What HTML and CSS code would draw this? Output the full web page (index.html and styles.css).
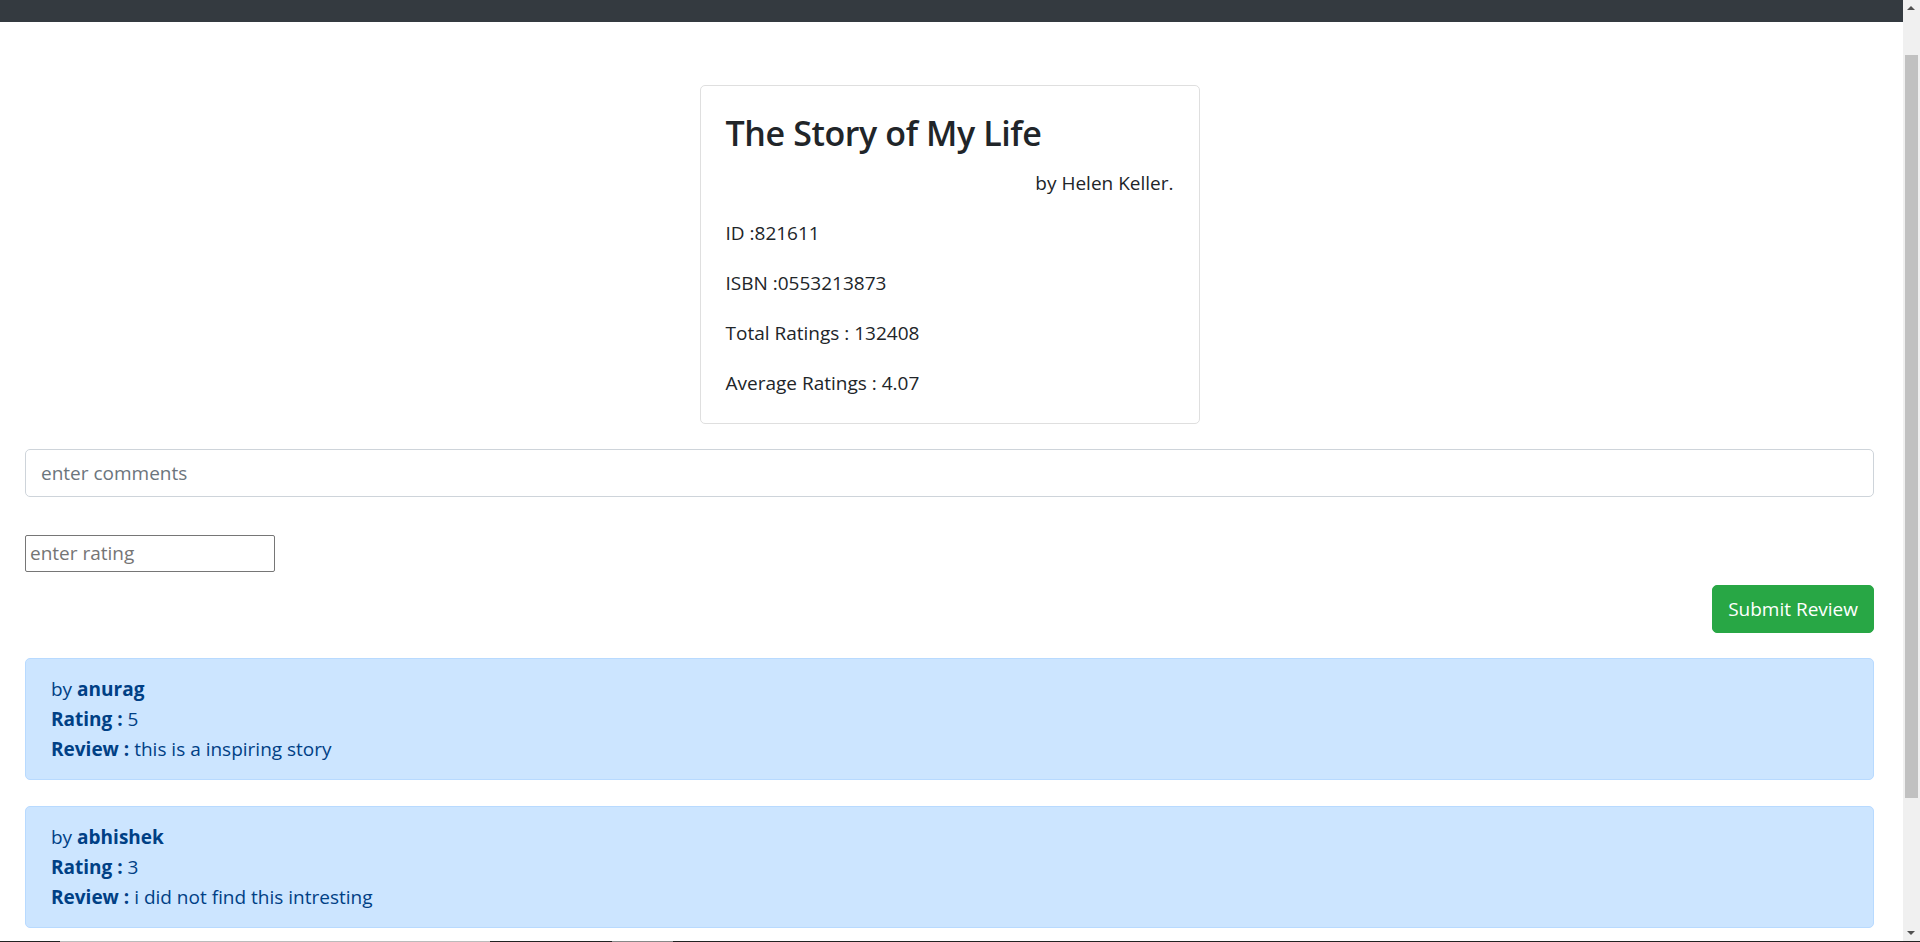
FILE: index.html
```html
<!DOCTYPE html>
<html lang="en">
<head>
<meta charset="utf-8">
<title>The Story of My Life</title>
<link rel="stylesheet" href="styles.css">
</head>
<body>
<nav class="navbar"></nav>
<main class="page">
  <div class="book-card">
    <h2 class="book-title">The Story of My Life</h2>
    <p class="book-author">by Helen Keller.</p>
    <p class="book-text">ID :821611</p>
    <p class="book-text">ISBN :0553213873</p>
    <p class="book-text">Total Ratings : 132408</p>
    <p class="book-text">Average Ratings : 4.07</p>
  </div>
  <form class="review-form">
    <input class="comment-input" type="text" placeholder="enter comments">
    <input class="rating-input" type="text" placeholder="enter rating">
    <div class="form-actions">
      <button class="btn-submit" type="button">Submit Review</button>
    </div>
  </form>
  <section class="reviews">
    <div class="review">
      <div>by <b>anurag</b></div>
      <div><b>Rating :</b> 5</div>
      <div><b>Review :</b> this is a inspiring story</div>
    </div>
    <div class="review">
      <div>by <b>abhishek</b></div>
      <div><b>Rating :</b> 3</div>
      <div><b>Review :</b> i did not find this intresting</div>
    </div>
  </section>
</main>
<div class="scrollbar">
  <div class="sb-arrow sb-up"></div>
  <div class="sb-track"><div class="sb-thumb"></div></div>
  <div class="sb-arrow sb-down"></div>
</div>
<div class="taskbar-line"></div>
</body>
</html>
```
FILE: styles.css
```css
* { box-sizing: border-box; }
html, body { margin: 0; height: 100%; overflow: hidden; }
body {
  background: #fff;
  color: #212529;
  font-family: "Open Sans", "Noto Sans", sans-serif;
  font-size: 19px;
  line-height: 30px;
  padding-right: 17px;
}
.navbar {
  height: 22px;
  background: #343a40;
}
.page {
  padding: 0 29px 0 25px;
}
.book-card {
  width: 500px;
  margin: 63px auto 0;
  border: 1px solid #dfdfdf;
  border-radius: 5px;
  padding: 25px;
}
.book-title {
  margin: 0 0 13px;
  font-size: 34px;
  line-height: 44px;
  font-weight: 600;
  letter-spacing: -0.4px;
}
.book-author {
  margin: 0 0 20px;
  text-align: right;
}
.book-text {
  margin: 0 0 20px;
}
.book-text:last-child { margin-bottom: 0; }

.review-form {
  margin-top: 25px;
  display: flex;
  flex-direction: column;
  align-items: flex-start;
}
.comment-input {
  width: 100%;
  height: 47.5px;
  padding: 7.5px 15px;
  font: inherit;
  color: #495057;
  border: 1px solid #ced4da;
  border-radius: 5px;
  outline: none;
}
.comment-input::placeholder { color: #6c757d; }
.rating-input {
  margin-top: 38px;
  width: 250px;
  height: 37px;
  padding: 2px 4px;
  font: inherit;
  border: 1px solid #767676;
  border-radius: 2px;
  outline: none;
}
.rating-input::placeholder { color: #757575; }
.form-actions {
  margin-top: 13px;
  width: 100%;
  display: flex;
  justify-content: flex-end;
}
.btn-submit {
  height: 48px;
  padding: 7.5px 15px;
  font: inherit;
  color: #fff;
  background: #28a745;
  border: 1px solid #28a745;
  border-radius: 5px;
}
.reviews {
  margin-top: 25px;
  display: flex;
  flex-direction: column;
  gap: 26px;
}
.review {
  background: #cce5ff;
  border: 1px solid #b8daff;
  border-radius: 5px;
  color: #004085;
  padding: 15px 25px;
}
.review b { font-weight: 700; }

.scrollbar {
  position: fixed;
  top: 0;
  right: 0;
  width: 17px;
  height: 100%;
  background: #f0f0f0;
  display: flex;
  flex-direction: column;
}
.sb-arrow {
  height: 17px;
  position: relative;
}
.sb-arrow::after {
  content: "";
  position: absolute;
  left: 4px;
  border-left: 4.5px solid transparent;
  border-right: 4.5px solid transparent;
}
.sb-up::after { top: 6px; border-bottom: 4.5px solid #505050; }
.sb-down::after { top: 6px; border-top: 4.5px solid #505050; }
.sb-track {
  flex: 1;
  padding: 38px 2px 127px;
  display: flex;
}
.sb-thumb {
  flex: 1;
  background: #c1c1c1;
}
.taskbar-line {
  position: fixed;
  left: 0;
  bottom: 0;
  width: 100%;
  height: 1px;
  background: linear-gradient(to right, #222 0 60px, #bbb 60px 490px, #222 490px 612px, #888 612px 673px, #222 673px);
}
```
